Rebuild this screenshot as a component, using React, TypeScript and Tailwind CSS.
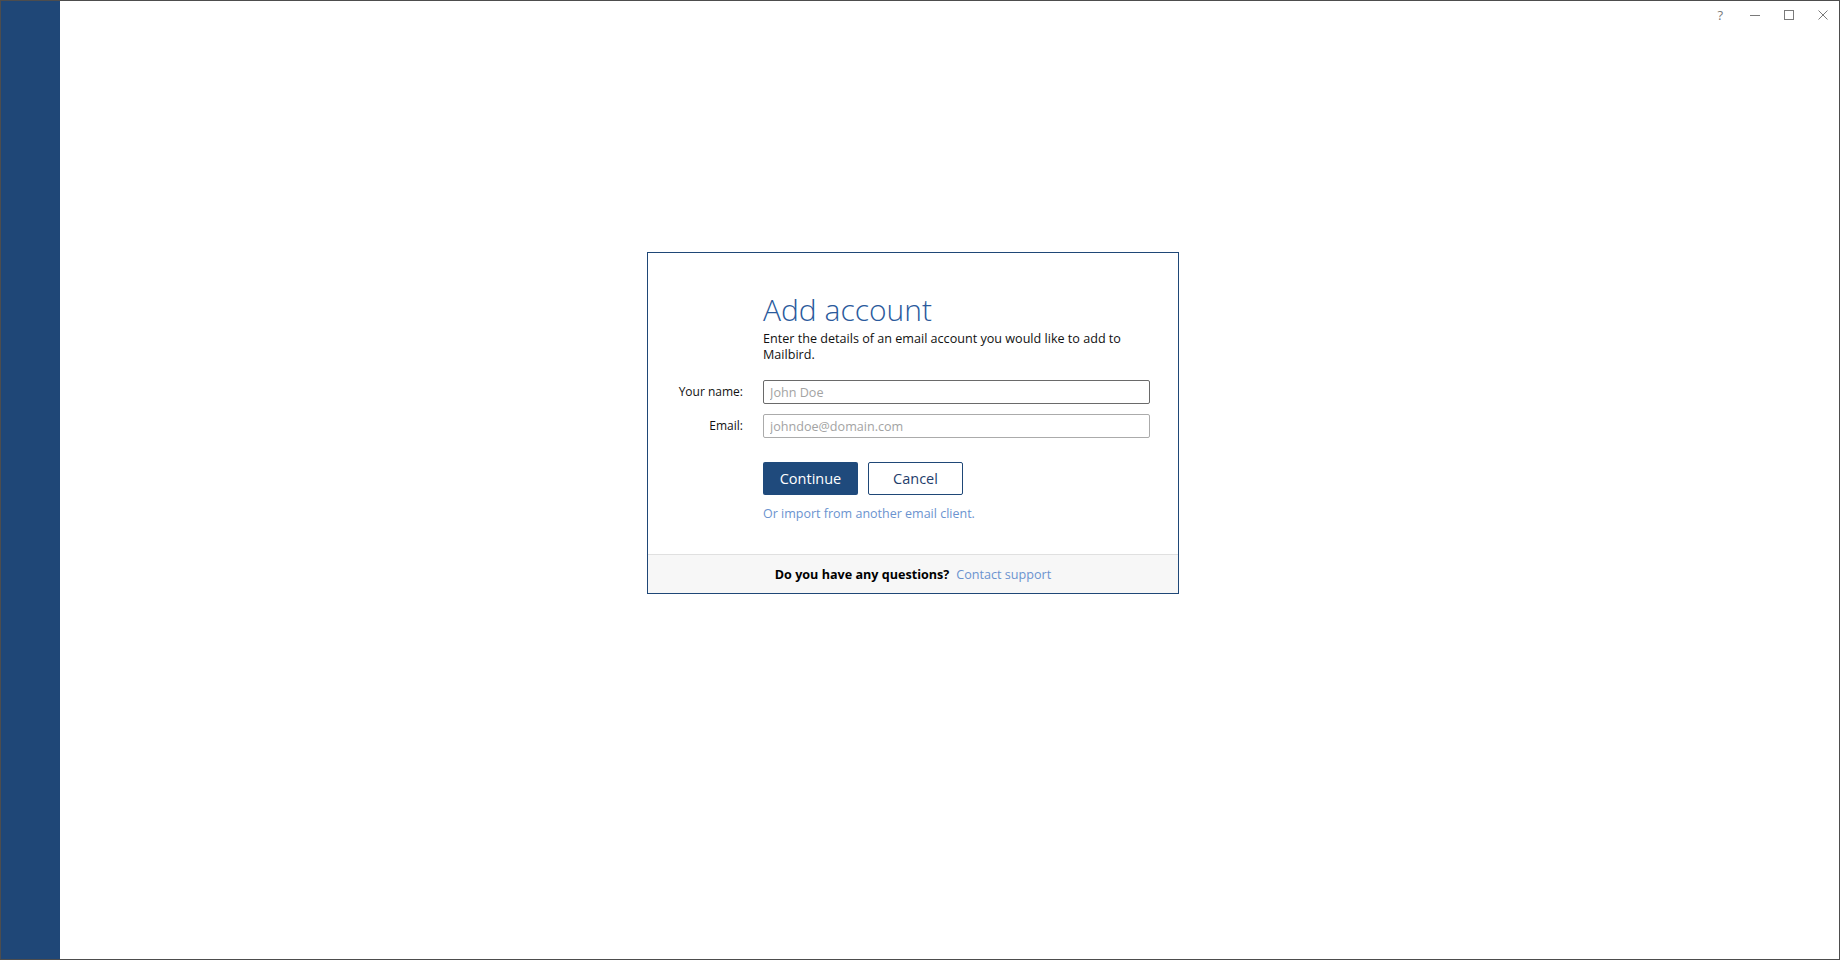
import React from "react";

function WindowControls() {
  return (
    <div className="flex h-[28px] items-center justify-end pr-[10px] text-[#7a7a7a]">
      <span className="mr-[26px] text-[13px] leading-none">?</span>
      <svg className="mr-[22px]" width="12" height="12" viewBox="0 0 12 12" fill="none" stroke="currentColor" strokeWidth="1">
        <path d="M1 6.5h10" />
      </svg>
      <svg className="mr-[22px]" width="12" height="12" viewBox="0 0 12 12" fill="none" stroke="currentColor" strokeWidth="1">
        <rect x="1.5" y="1.5" width="9" height="9" />
      </svg>
      <svg width="12" height="12" viewBox="0 0 12 12" fill="none" stroke="currentColor" strokeWidth="1">
        <path d="M1.5 1.5l9 9M10.5 1.5l-9 9" />
      </svg>
    </div>
  );
}

function Field({ label, placeholder, focused }: { label: string; placeholder: string; focused?: boolean }) {
  return (
    <>
      <label className="flex items-center justify-end text-[12px] text-[#111]">{label}</label>
      <input
        placeholder={placeholder}
        className={
          "h-[24px] w-full rounded-[2px] border bg-white px-[6px] text-[12.6px] text-[#222] outline-none placeholder:text-[#a3a3a3] " +
          (focused ? "border-[#6a6a6a]" : "border-[#ababab]")
        }
      />
    </>
  );
}

export default function App() {
  return (
    <div className="flex h-[960px] w-[1840px] border border-[#4d4d4d] bg-white font-['Open_Sans',sans-serif]">
      <div className="w-[59px] shrink-0 bg-[#1f4777]" />
      <div className="flex flex-1 flex-col">
        <WindowControls />
        <div className="ml-[587px] mt-[223px] w-[532px] border border-[#1f4777] bg-white">
          <div className="grid grid-cols-[95px_387px] gap-x-[20px] pb-[32px] pt-[39px]">
            <div />
            <h1 className="text-[30px] font-light leading-[36px] text-[#2a5a9c]">Add account</h1>
            <div />
            <p className="mt-[3px] whitespace-nowrap text-[12.6px] leading-[16px] text-[#111]">
              Enter the details of an email account you would like to add to
              <br />
              Mailbird.
            </p>
            <div className="col-span-2 mt-[17px] grid grid-cols-[95px_387px] gap-x-[20px] gap-y-[10px]">
              <Field label="Your name:" placeholder="John Doe" focused />
              <Field label="Email:" placeholder="johndoe@domain.com" />
            </div>
            <div />
            <div className="mt-[24px] flex gap-[10px]">
              <button className="h-[33px] w-[95px] rounded-[2px] bg-[#1f4a7c] text-[14.5px] text-white">Continue</button>
              <button className="h-[33px] w-[95px] rounded-[2px] border border-[#1f4777] bg-white text-[14.5px] text-[#1f3d6b]">
                Cancel
              </button>
            </div>
            <div />
            <a className="mt-[11px] text-[12.5px] leading-[16px] text-[#6b93cf]">Or import from another email client.</a>
          </div>
          <div className="flex h-[39px] items-center justify-center gap-[7px] border-t border-[#e0e0e0] bg-[#f7f7f7] pt-[2px] text-[12.6px]">
            <span className="font-bold text-black">Do you have any questions?</span>
            <a className="text-[#6b93cf]">Contact support</a>
          </div>
        </div>
      </div>
    </div>
  );
}
